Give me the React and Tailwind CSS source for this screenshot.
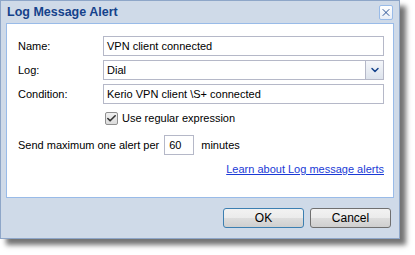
import { Check, ChevronDown, X } from "lucide-react";

function Field({ label, children }) {
  return (
    <div className="flex h-5 items-center">
      <span className="w-[85px] shrink-0">{label}</span>
      {children}
    </div>
  );
}

function TextBox({ value, className = "" }) {
  return (
    <div className={`flex h-5 items-center border border-[#b5b8c8] bg-white px-[3px] ${className}`}>
      {value}
    </div>
  );
}

function Button({ children, focused }) {
  return (
    <button
      className={`h-5 w-[81px] rounded-[3px] border bg-[linear-gradient(#f2f2f2_0%,#ebebeb_50%,#dddddd_50%,#cfcfcf_100%)] text-[12px] text-black ${
        focused ? "border-[#3c7fb1]" : "border-[#707070]"
      }`}
    >
      {children}
    </button>
  );
}

export default function App() {
  return (
    <div className="h-[255px] w-[415px] bg-white font-['Liberation_Sans',Arial,sans-serif] text-[11px] leading-[16px] text-black">
      <div className="flex h-[239px] w-[400px] flex-col border border-[#8ea6c8] bg-[#cfdae8] shadow-[6px_6px_5px_rgba(0,0,0,0.55)]">
        <div className="flex h-[22px] shrink-0 items-center justify-between pl-[6px] pr-[6px]">
          <span className="text-[12.5px] font-bold text-[#15428b]">Log Message Alert</span>
          <span className="flex h-[15px] w-[14px] items-center justify-center rounded-[2px] border border-[#99bbe8] bg-[linear-gradient(#ffffff,#e8eef7)] text-[#15428b]">
            <X className="size-[13px]" strokeWidth={1.8} />
          </span>
        </div>

        <div className="mx-[5px] flex h-[175px] flex-col border border-[#99bbe8] bg-white pl-[11px] pr-[9px] pt-[12px]">
          <div className="flex flex-col gap-1">
            <Field label="Name:">
              <TextBox value="VPN client connected" className="flex-1" />
            </Field>
            <Field label="Log:">
              <div className="flex h-5 flex-1 border border-[#b5b8c8] bg-white">
                <span className="flex flex-1 items-center px-[3px]">Dial</span>
                <span className="flex w-[18px] items-center justify-center border-l border-[#b5b8c8] bg-[linear-gradient(#f4f6fa,#dde3ec)] text-[#15428b]">
                  <ChevronDown className="size-3" strokeWidth={3} />
                </span>
              </div>
            </Field>
            <Field label="Condition:">
              <TextBox value="Kerio VPN client \S+ connected" className="flex-1" />
            </Field>
          </div>

          <div className="mt-[6px] flex items-center gap-[4px] pl-[87px]">
            <span className="flex size-[13px] items-center justify-center rounded-[2px] border border-[#8f8f8f] bg-[linear-gradient(#f0f0f0,#dcdcdc)] text-[#333]">
              <Check className="size-[11px]" strokeWidth={3.5} />
            </span>
            <span>Use regular expression</span>
          </div>

          <div className="mt-[9px] flex items-center">
            <span>Send maximum one alert per</span>
            <TextBox value="60" className="ml-[5px] w-[30px] px-[4px]" />
            <span className="ml-[7px]">minutes</span>
          </div>

          <div className="mt-[6px] flex justify-end">
            <a href="#" className="text-[#1a3ad6] underline">
              Learn about Log message alerts
            </a>
          </div>
        </div>

        <div className="flex flex-1 items-start justify-end gap-[6px] pr-[8px] pt-[10px]">
          <Button focused>OK</Button>
          <Button>Cancel</Button>
        </div>
      </div>
    </div>
  );
}
